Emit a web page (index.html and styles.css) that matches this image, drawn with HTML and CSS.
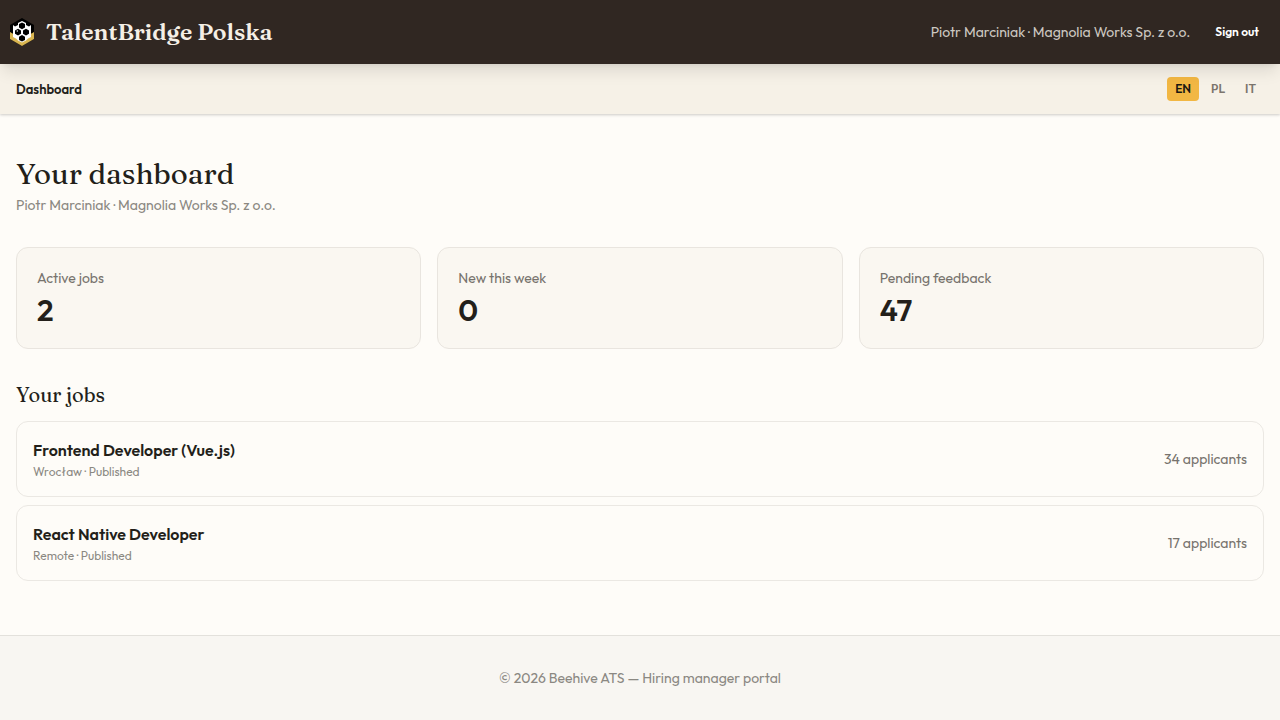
FILE: index.html
```html
<!DOCTYPE html>
<html lang="en">

<head>
    <meta charset="UTF-8">
    <meta name="viewport" content="width=device-width, initial-scale=1.0">
    <title>Your dashboard - TalentBridge Polska</title>
    <link rel="stylesheet" href="styles.css">
</head>

<body>

    <header class="topbar">
        <a class="brand" href="#">
            <svg class="brand-logo" viewBox="0 0 24 28" aria-hidden="true">
                <path d="M12 0 24 7v14l-12 7-12-7V7z" fill="#000" />
                <path d="M0 14l12 7 12-7v7l-12 7-12-7z" fill="#d9b550" />
                <path d="M12 3l4 2v2l3 1.500 2-1.500v12l-3 1.500-2 2-4 2-4-2-2-2-3-1.500V7l2 1.500L8 7V5z" fill="#fff" />
                <g fill="#000">
                    <path d="M12 4.400l3 1.700v3.400l-3 1.700-3-1.700V6.100z" />
                    <path d="M8 10.700l3 1.700v3.400l-3 1.700-3-1.700v-3.400z" />
                    <path d="M16 10.700l3 1.700v3.400l-3 1.700-3-1.700v-3.400z" />
                    <path d="M12 17l3 1.700v3.200l-3 1.700-3-1.700v-3.200z" />
                </g>
                <circle cx="7.300" cy="13" r=".7" fill="#fff" />
            </svg>
            <span class="brand-name">TalentBridge Polska</span>
        </a>
        <div class="account">
            <span class="account-name">Piotr Marciniak · Magnolia Works Sp. z o.o.</span>
            <button class="sign-out" type="button">Sign out</button>
        </div>
    </header>

    <nav class="subnav">
        <a class="subnav-link" href="#">Dashboard</a>
        <div class="languages">
            <a class="language active" href="#en">EN</a>
            <a class="language" href="#pl">PL</a>
            <a class="language" href="#it">IT</a>
        </div>
    </nav>

    <main class="content">
        <h1>Your dashboard</h1>
        <p class="subtitle">Piotr Marciniak · Magnolia Works Sp. z o.o.</p>

        <div class="stats">
            <div class="stat">
                <p class="stat-label">Active jobs</p>
                <p class="stat-value">2</p>
            </div>
            <div class="stat">
                <p class="stat-label">New this week</p>
                <p class="stat-value">0</p>
            </div>
            <div class="stat">
                <p class="stat-label">Pending feedback</p>
                <p class="stat-value">47</p>
            </div>
        </div>

        <h2>Your jobs</h2>
        <ul class="jobs">
            <li>
                <a class="job" href="#">
                    <div>
                        <p class="job-title">Frontend Developer (Vue.js)</p>
                        <p class="job-meta">Wrocław · Published</p>
                    </div>
                    <span class="job-count">34 applicants</span>
                </a>
            </li>
            <li>
                <a class="job" href="#">
                    <div>
                        <p class="job-title">React Native Developer</p>
                        <p class="job-meta">Remote · Published</p>
                    </div>
                    <span class="job-count">17 applicants</span>
                </a>
            </li>
        </ul>
    </main>

    <footer class="footer">© 2026 Beehive ATS — Hiring manager portal</footer>

</body>

</html>
```
FILE: styles.css
```css
* {
    box-sizing: border-box;
}

body {
    font-family: Outfit, Lato, sans-serif;
    font-size: 14px;
    line-height: 20px;
    background-color: #fefcf8;
    color: #231f1a;
    margin: 0;
    min-height: 100vh;
    display: flex;
    flex-direction: column;
}

h1,
h2,
p,
ul {
    margin: 0;
    padding: 0;
}

a {
    color: inherit;
    text-decoration: none;
}

.topbar {
    position: relative;
    z-index: 1;
    display: flex;
    justify-content: space-between;
    align-items: center;
    height: 64px;
    padding: 0 10px;
    background-color: #302722;
    box-shadow: 0 10px 15px -3px rgba(0, 0, 0, 0.1), 0 4px 6px -4px rgba(0, 0, 0, 0.1);
}

.brand {
    display: flex;
    align-items: center;
    gap: 12px;
}

.brand-logo {
    width: 24px;
    height: 28px;
}

.brand-name {
    font-family: Fraunces, "Liberation Serif", serif;
    font-size: 23px;
    font-weight: 600;
    line-height: 32px;
    color: #f5efe6;
}

.account {
    display: flex;
    align-items: center;
    gap: 14px;
}

.account-name {
    color: #cdc8c1;
}

.sign-out {
    font-family: inherit;
    font-size: 12px;
    font-weight: 600;
    line-height: 16px;
    color: #fff;
    background: none;
    border: none;
    padding: 8px 11px;
    cursor: pointer;
}

.subnav {
    display: flex;
    justify-content: space-between;
    align-items: center;
    height: 50px;
    padding: 0 16px;
    background-color: #f6f1e7;
    box-shadow: 0 1px 3px rgba(0, 0, 0, 0.15), 0 1px 2px rgba(0, 0, 0, 0.06);
}

.subnav-link {
    font-size: 13px;
    font-weight: 600;
}

.languages {
    display: flex;
    gap: 4px;
}

.language {
    font-size: 12px;
    font-weight: 600;
    line-height: 16px;
    color: #7c756d;
    padding: 4px 8px;
    border-radius: 4px;
}

.language.active {
    background-color: #f2b743;
    color: #1c1712;
}

.content {
    flex: 1;
    padding: 42px 16px 48px;
}

h1,
h2 {
    font-family: Fraunces, "Liberation Serif", serif;
    font-weight: 500;
}

h1 {
    font-size: 29px;
    line-height: 36px;
}

h2 {
    font-size: 20px;
    line-height: 28px;
    margin: 32px 0 12px;
}

.subtitle {
    margin-top: 3px;
    color: #8b8882;
}

.stats {
    display: grid;
    grid-template-columns: repeat(3, 1fr);
    gap: 16px;
    margin-top: 32px;
}

.stat {
    padding: 20px;
    background-color: #faf7f1;
    border: 1px solid #e9e5df;
    border-radius: 12px;
}

.stat-label {
    color: #77736d;
}

.stat-value {
    font-size: 30px;
    font-weight: 600;
    line-height: 36px;
    margin-top: 4px;
}

.jobs {
    display: grid;
    gap: 8px;
    list-style: none;
}

.job {
    display: flex;
    justify-content: space-between;
    align-items: center;
    padding: 16px;
    border: 1px solid #ebe8e3;
    border-radius: 12px;
}

.job-title {
    font-size: 16px;
    font-weight: 600;
    line-height: 24px;
}

.job-meta {
    font-size: 12px;
    line-height: 16px;
    margin-top: 2px;
    color: #8b8882;
}

.job-count {
    color: #77736d;
}

.footer {
    padding: 32px 16px;
    text-align: center;
    color: #8b8882;
    background-color: #f8f6f2;
    border-top: 1px solid #e3e1dc;
}
```
